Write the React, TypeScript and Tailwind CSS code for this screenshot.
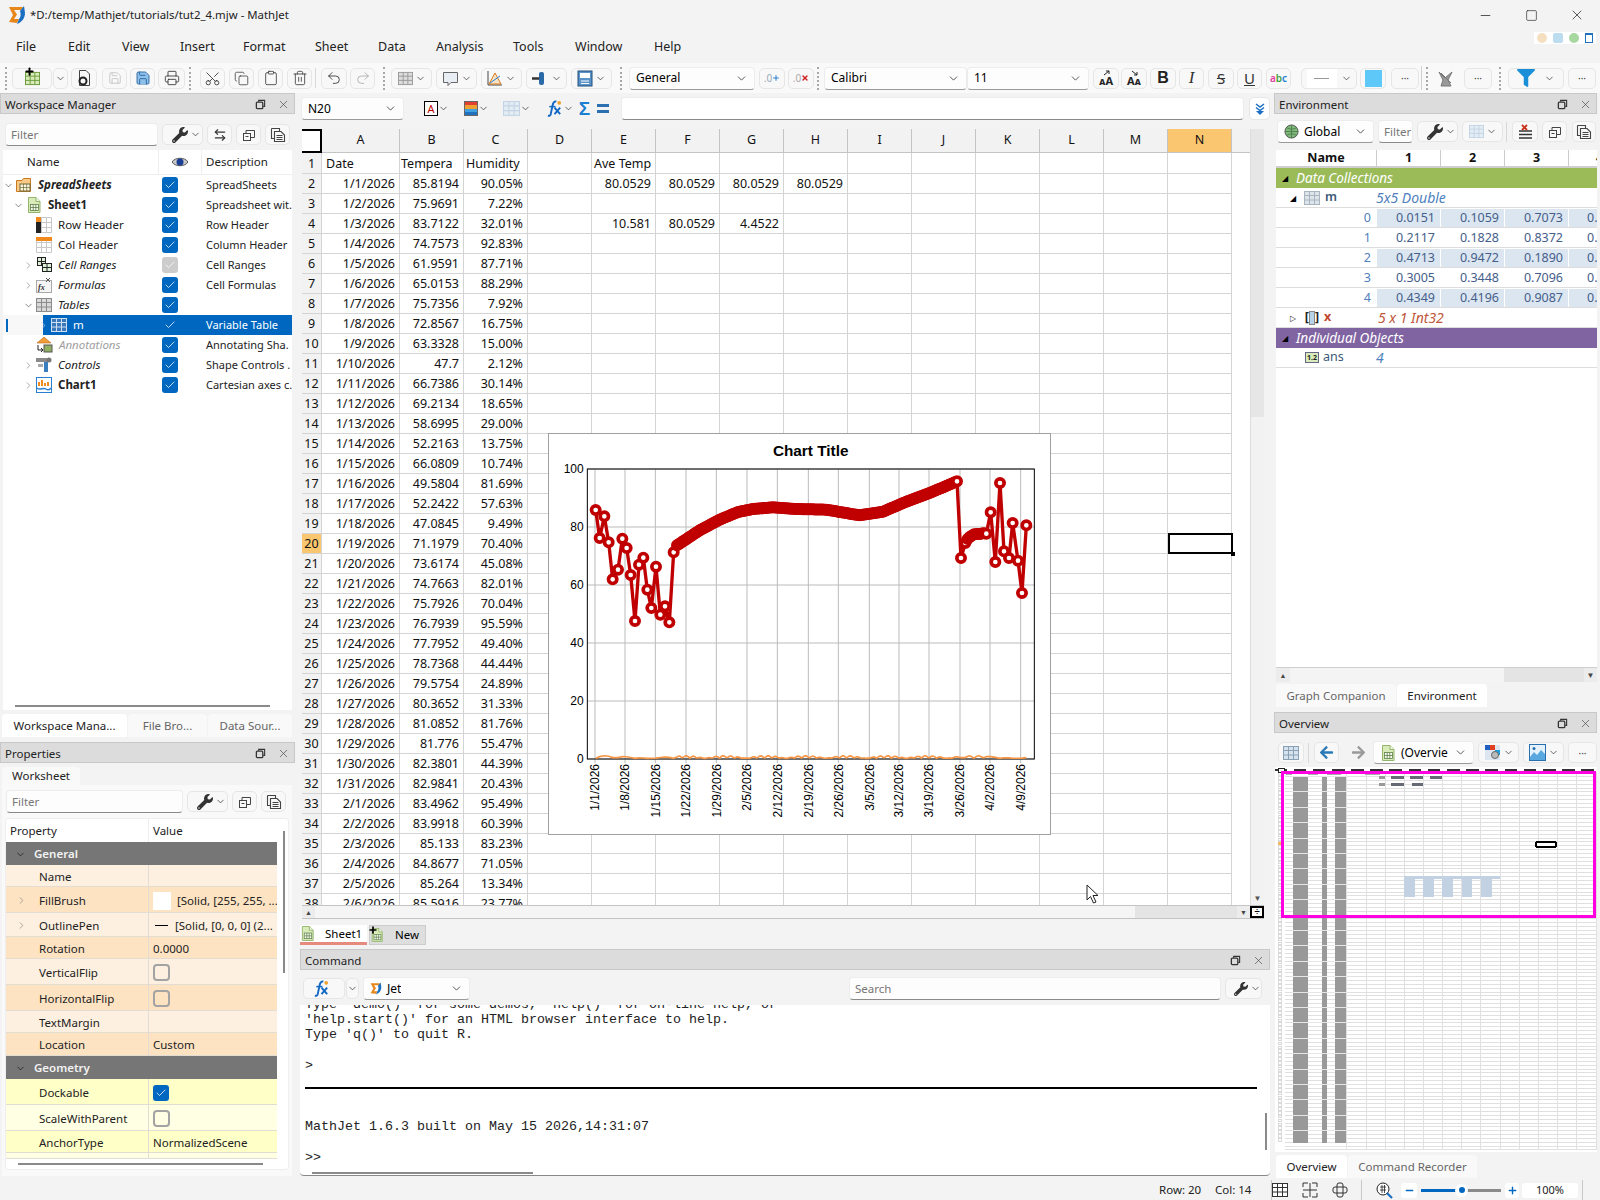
import type { ReactNode } from 'react';
import { ArrowLeftRight, Check, ChevronDown, ChevronRight, Clipboard, Copy, Minus, Plus, Printer, Redo2, Save, Scissors, Square, Trash2, Undo2, X } from 'lucide-react';
import { FaArrowLeft, FaArrowRight, FaFilter, FaWrench } from 'react-icons/fa';

const sheetRows = [
  ['1/1/2026', '85.8194', '90.05%'], ['1/2/2026', '75.9691', '7.22%'], ['1/3/2026', '83.7122', '32.01%'],
  ['1/4/2026', '74.7573', '92.83%'], ['1/5/2026', '61.9591', '87.71%'], ['1/6/2026', '65.0153', '88.29%'],
  ['1/7/2026', '75.7356', '7.92%'], ['1/8/2026', '72.8567', '16.75%'], ['1/9/2026', '63.3328', '15.00%'],
  ['1/10/2026', '47.7', '2.12%'], ['1/11/2026', '66.7386', '30.14%'], ['1/12/2026', '69.2134', '18.65%'],
  ['1/13/2026', '58.6995', '29.00%'], ['1/14/2026', '52.2163', '13.75%'], ['1/15/2026', '66.0809', '10.74%'],
  ['1/16/2026', '49.5804', '81.69%'], ['1/17/2026', '52.2422', '57.63%'], ['1/18/2026', '47.0845', '9.49%'],
  ['1/19/2026', '71.1979', '70.40%'], ['1/20/2026', '73.6174', '45.08%'], ['1/21/2026', '74.7663', '82.01%'],
  ['1/22/2026', '75.7926', '70.04%'], ['1/23/2026', '76.7939', '95.59%'], ['1/24/2026', '77.7952', '49.40%'],
  ['1/25/2026', '78.7368', '44.44%'], ['1/26/2026', '79.5754', '24.89%'], ['1/27/2026', '80.3652', '31.33%'],
  ['1/28/2026', '81.0852', '81.76%'], ['1/29/2026', '81.776', '55.47%'], ['1/30/2026', '82.3801', '44.39%'],
  ['1/31/2026', '82.9841', '20.43%'], ['2/1/2026', '83.4962', '95.49%'], ['2/2/2026', '83.9918', '60.39%'],
  ['2/3/2026', '85.133', '83.23%'], ['2/4/2026', '84.8677', '71.05%'], ['2/5/2026', '85.264', '13.34%'],
  ['2/6/2026', '85.5916', '23.77%'],
];

const columns = ['B', 'C', 'D', 'E', 'F', 'G', 'H', 'I', 'J', 'K', 'L', 'M', 'N'];

const extraCells: Record<number, Record<string, string>> = {
  2: { E: '80.0529', F: '80.0529', G: '80.0529', H: '80.0529' },
  4: { E: '10.581', F: '80.0529', G: '4.4522' },
};

function GridIcon({ size = 14, color = '#8f9aa3', fill = '#e8ecef' }: { size?: number; color?: string; fill?: string }) {
  return (
    <svg width={size} height={size} viewBox="0 0 16 16" className="shrink-0">
      <rect x="0.5" y="1.5" width="15" height="13" fill={fill} stroke={color} />
      <path d="M0.5 5.5H15.5M0.5 10H15.5M5.5 1.5V14.5M10.5 1.5V14.5" stroke={color} fill="none" />
    </svg>
  );
}

function SheetIcon({ size = 16 }: { size?: number }) {
  return (
    <svg width={size} height={size} viewBox="0 0 16 16" className="shrink-0">
      <path d="M2.5 0.5H10L14 4.5V15.5H2.5Z" fill="#d8ebb8" stroke="#93b56c" />
      <path d="M10 0.5V4.5H14" fill="#f3f9e8" stroke="#93b56c" />
      <rect x="4.5" y="7.5" width="8" height="6" fill="#f6faef" stroke="#5f7f4a" strokeWidth="0.8" />
      <path d="M4.5 10.5H12.5M7.2 7.5V13.5M9.8 7.5V13.5" stroke="#5f7f4a" strokeWidth="0.8" />
    </svg>
  );
}

function FxIcon({ size = 18 }: { size?: number }) {
  return (
    <svg width={size} height={size} viewBox="0 0 18 18" className="shrink-0">
      <path d="M11 1.5C8 1 7.5 3 7 5.5L5 15C4.6 16.7 3.5 17 2 16.5" fill="none" stroke="#1168c4" strokeWidth="2" />
      <path d="M3.5 7H10" stroke="#1168c4" strokeWidth="1.6" />
      <path d="M9 8L15 15M15 8L9 15" stroke="#1168c4" strokeWidth="2" />
      <circle cx="14" cy="3" r="2" fill="#f0a030" />
    </svg>
  );
}

function DockIcon({ size = 11 }: { size?: number }) {
  return (
    <svg width={size} height={size} viewBox="0 0 12 12" className="shrink-0">
      <rect x="1.5" y="3.5" width="7" height="7" rx="1" fill="none" stroke="#333" strokeWidth="1.4" />
      <path d="M4 3V1.5H10.5V8H9" fill="none" stroke="#333" strokeWidth="1.2" />
    </svg>
  );
}

function PasteDocIcon() {
  return (
    <svg width="16" height="16" viewBox="0 0 16 16" className="shrink-0">
      <path d="M1.5 1.5H9.5V4M4.5 4.5H11L14.5 8V14.5H4.5Z M1.5 1.5V11.5H4.5" fill="none" stroke="#444" strokeWidth="1.1" />
      <path d="M6.5 8.5H12.5M6.5 10.5H12.5M6.5 12.5H12.5" stroke="#444" />
    </svg>
  );
}

function CopyDocIcon() {
  return (
    <svg width="14" height="14" viewBox="0 0 14 14" className="shrink-0">
      <rect x="1.5" y="5.5" width="7" height="7" fill="none" stroke="#444" />
      <path d="M3.5 8.5H6.5" stroke="#444" />
      <path d="M4 5V2.5H12.5V9.5H9" fill="none" stroke="#444" />
    </svg>
  );
}

function Tick({ color = '#333' }: { color?: string }) {
  return <ChevronDown size={11} color={color} strokeWidth={1.6} className="shrink-0" />;
}

function Btn({ className, children }: { className: string; children?: ReactNode }) {
  return (
    <div className={`flex h-[21px] shrink-0 items-center justify-center rounded-[5px] border border-[#e6e6e6] bg-[#f8f8f8] ${className}`}>
      {children}
    </div>
  );
}

function Grip({ className = '' }: { className?: string }) {
  return <div className={`h-[23px] w-0 shrink-0 border-l-2 border-dotted border-[#a8a8a8] ${className}`} />;
}

function Combo({ className, children }: { className: string; children: ReactNode }) {
  return (
    <div className={`flex h-[23px] shrink-0 items-center justify-between rounded-[4px] border border-[#ececec] border-b-[#9a9a9a] bg-[#fdfdfd] px-[6px] text-[12px] ${className}`}>
      <div className="flex items-center gap-[5px] overflow-hidden whitespace-nowrap">{children}</div>
      <ChevronDown size={13} color="#333" strokeWidth={1.5} className="shrink-0" />
    </div>
  );
}

function FilterInput({ className, label = 'Filter' }: { className: string; label?: string }) {
  return (
    <div className={`flex h-[23px] shrink-0 items-center rounded-[4px] border border-[#ececec] border-b-[#8a8a8a] bg-[#fdfdfd] pl-[5px] text-[11.5px] text-[#777] ${className}`}>
      {label}
    </div>
  );
}

function WrenchBtn({ className = 'w-[41px]' }: { className?: string }) {
  return (
    <Btn className={`${className} gap-[2px] pl-[7px]`}>
      <FaWrench size={16} color="#333" />
      <Tick />
    </Btn>
  );
}

function DockTitle({ title }: { title: string }) {
  return (
    <div className="flex h-[21px] shrink-0 items-center justify-between border border-[#c8c8c8] bg-[#dcdcdc] pl-[4px] pr-[4px] pt-[2px] text-[11.5px] text-[#222]">
      <span>{title}</span>
      <div className="flex items-center gap-[11px]">
        <DockIcon />
        <X size={13} color="#444" strokeWidth={1.2} />
      </div>
    </div>
  );
}

function TabStrip({ tabs, className = '' }: { tabs: { label: string; active?: boolean; width: string }[]; className?: string }) {
  return (
    <div className={`flex h-[23px] shrink-0 gap-[1px] text-[11.5px] ${className}`}>
      {tabs.map((t) => (
        <div
          key={t.label}
          className={`flex items-center justify-center rounded-t-[4px] whitespace-nowrap ${t.width} ${t.active ? 'bg-white text-[#222]' : 'bg-[#f9f9f9] text-[#666]'}`}
        >
          {t.label}
        </div>
      ))}
    </div>
  );
}

function CheckBox({ checked = true, disabled = false }: { checked?: boolean; disabled?: boolean }) {
  if (!checked) return <div className="h-[17px] w-[17px] rounded-[4px] border-2 border-[#a3a3a3]" />;
  return (
    <div className={`flex h-[16px] w-[16px] items-center justify-center rounded-[3px] ${disabled ? 'bg-[#cccccc]' : 'bg-[#0067c0]'}`}>
      <Check size={12} color="#fff" strokeWidth={1.5} />
    </div>
  );
}

function TitleBar() {
  return (
    <div className="flex h-[30px] shrink-0 items-center">
      <svg width="18" height="20" viewBox="0 0 18 20" className="ml-[8px] shrink-0">
        <path d="M1 2H15L13 5H6L9 9.5L6 14H11L9 18L1 17L5 10Z" fill="#e8861a" />
        <path d="M12 6L16 1L17 8C17 13 14 17 9 19L11 14C13 12 13 9 12 6Z" fill="#1a6fc2" />
      </svg>
      <span className="ml-[4px] text-[11.4px] text-[#222]">*D:/temp/Mathjet/tutorials/tut2_4.mjw - MathJet</span>
      <div className="ml-auto flex items-center">
        <div className="flex w-[46px] justify-center"><Minus size={15} color="#222" strokeWidth={1.2} /></div>
        <div className="flex w-[46px] justify-center"><Square size={13} color="#222" strokeWidth={1.2} /></div>
        <div className="flex w-[46px] justify-center"><X size={16} color="#222" strokeWidth={1.1} /></div>
      </div>
    </div>
  );
}

const menus = [
  { label: 'File', width: 'w-[52px]' },
  { label: 'Edit', width: 'w-[54px]' },
  { label: 'View', width: 'w-[58px]' },
  { label: 'Insert', width: 'w-[63px]' },
  { label: 'Format', width: 'w-[72px]' },
  { label: 'Sheet', width: 'w-[63px]' },
  { label: 'Data', width: 'w-[58px]' },
  { label: 'Analysis', width: 'w-[77px]' },
  { label: 'Tools', width: 'w-[62px]' },
  { label: 'Window', width: 'w-[79px]' },
  { label: 'Help', width: 'w-[50px]' },
];

function MenuBar() {
  return (
    <div className="relative flex h-[33px] shrink-0 items-center pl-[16px] pt-[2px] text-[12.5px] text-[#222]">
      {menus.map((m) => (
        <div key={m.label} className={m.width}>{m.label}</div>
      ))}
      <div className="absolute left-[1534px] top-[2px] flex h-[12px] w-[62px] items-center justify-around bg-white">
        <div className="h-[10px] w-[10px] rounded-full bg-[#f6dfc0]" />
        <div className="h-[10px] w-[10px] rounded-[2px] bg-[#bcdcf0]" />
        <div className="h-[10px] w-[10px] rounded-full bg-[#a6d8a0]" />
        <div className="h-[10px] w-[8px] border border-[#2070c0] border-t-2" />
      </div>
    </div>
  );
}

function ColorDots({ size = 16 }: { size?: number }) {
  return (
    <svg width={size} height={size} viewBox="0 0 16 16" className="shrink-0">
      <path d="M1 1V15H15" fill="none" stroke="#444" />
      <path d="M2 14L8 3L14 14Z" fill="#f7e3c5" stroke="#d97a20" />
      <path d="M3 13L13 6" stroke="#2a7fd0" />
    </svg>
  );
}

function FontSizeBtn({ className, up }: { className: string; up: boolean }) {
  return (
    <Btn className={`relative items-end ${className}`}>
      <span className="text-[11px] font-bold leading-[15px] text-[#222]">{up ? 'ᴀA' : 'Aᴀ'}</span>
      <svg width="10" height="6" viewBox="0 0 10 6" className="absolute left-[9px] top-[1px]">
        <path d={up ? 'M1 5L6 1M6 1H3M6 1V4' : 'M1 1L6 5M6 5H3M6 5V2'} fill="none" stroke="#222" />
      </svg>
    </Btn>
  );
}

function MainToolbar() {
  return (
    <div className="flex h-[30px] shrink-0 items-center bg-[#f9f9f9] pl-[5px]">
      <Grip />
      <Btn className="ml-[5px] w-[40px]">
        <div className="relative">
          <GridIcon size={15} color="#6a9a3a" fill="#d8ebb8" />
          <Plus size={11} color="#000" strokeWidth={4} className="absolute left-[-1px] top-[-5px]" />
        </div>
      </Btn>
      <Btn className="ml-[1px] w-[15px]"><Tick /></Btn>
      <Btn className="ml-[3px] w-[26px]">
        <svg width="16" height="18" viewBox="0 0 16 18"><path d="M3.5 1.5H10L13.5 5V16.5H3.5Z" fill="none" stroke="#444" /><circle cx="7" cy="12" r="3.5" fill="none" stroke="#222" strokeWidth="2" /></svg>
      </Btn>
      <Btn className="ml-[5px] w-[25px]"><Save size={14} color="#bbb" strokeWidth={1.3} /></Btn>
      <Btn className="ml-[3px] w-[25px]"><Save size={16} color="#1f5f9e" fill="#8fc0ea" strokeWidth={1.3} /></Btn>
      <Btn className="ml-[3px] w-[27px]"><Printer size={16} color="#333" strokeWidth={1.3} /></Btn>
      <Grip className="ml-[4px]" />
      <Btn className="ml-[9px] w-[25px]"><Scissors size={17} color="#333" strokeWidth={1.2} className="-rotate-90" /></Btn>
      <Btn className="ml-[4px] w-[25px]"><Copy size={15} color="#333" strokeWidth={1.2} /></Btn>
      <Btn className="ml-[4px] w-[25px]"><Clipboard size={16} color="#333" strokeWidth={1.2} /></Btn>
      <Btn className="ml-[4px] w-[25px]"><Trash2 size={16} color="#333" strokeWidth={1.2} /></Btn>
      <div className="ml-[3px] h-[20px] w-px bg-[#d8d8d8]" />
      <Btn className="ml-[5px] w-[26px]"><Undo2 size={16} color="#333" strokeWidth={1.3} /></Btn>
      <Btn className="ml-[3px] w-[25px]"><Redo2 size={16} color="#aaa" strokeWidth={1.3} /></Btn>
      <Grip className="ml-[8px]" />
      <Btn className="ml-[6px] w-[41px] gap-[2px]"><GridIcon size={15} color="#999" fill="#ddd" /><Tick /></Btn>
      <Btn className="ml-[4px] w-[41px] gap-[2px]">
        <svg width="17" height="17" viewBox="0 0 17 17"><path d="M1.5 2.5H15.5V12.5H9L6 15.5V12.5H1.5Z" fill="#e8eef4" stroke="#666" /></svg>
        <Tick />
      </Btn>
      <Btn className="ml-[4px] w-[41px] gap-[2px]"><ColorDots /><Tick /></Btn>
      <Btn className="ml-[4px] w-[41px] gap-[2px]">
        <svg width="17" height="15" viewBox="0 0 17 15"><rect x="7" y="1" width="5" height="13" rx="2" fill="#2a6aa8" /><path d="M0 7.5H7" stroke="#333" strokeWidth="2.5" /></svg>
        <Tick />
      </Btn>
      <Btn className="ml-[4px] w-[41px] gap-[2px]">
        <svg width="16" height="17" viewBox="0 0 16 17"><rect x="1" y="1" width="14" height="15" fill="#5a93c8" stroke="#1f4d7a" /><rect x="3" y="3" width="10" height="5" fill="#fff" /><path d="M4 11H12M4 13.5H12" stroke="#fff" /></svg>
        <Tick />
      </Btn>
      <Grip className="ml-[8px]" />
      <Combo className="ml-[7px] w-[126px]">General</Combo>
      <Btn className="ml-[4px] w-[26px]"><span className="text-[10px] text-[#9ab]">.0</span><Plus size={8} color="#2a7fd0" strokeWidth={3} /></Btn>
      <Btn className="ml-[3px] w-[26px]"><span className="text-[10px] text-[#aaa]">.0</span><X size={8} color="#d02020" strokeWidth={4} /></Btn>
      <Grip className="ml-[3px]" />
      <Combo className="ml-[5px] w-[143px]">Calibri</Combo>
      <Combo className="w-[122px]">11</Combo>
      <FontSizeBtn className="ml-[4px] w-[26px]" up />
      <FontSizeBtn className="ml-[2px] w-[26px]" up={false} />
      <Btn className="ml-[3px] w-[26px]"><span className="font-['Liberation_Sans'] text-[16px] font-bold text-[#222]">B</span></Btn>
      <Btn className="ml-[3px] w-[25px]"><span className="font-['Liberation_Serif'] text-[17px] italic text-[#333]">I</span></Btn>
      <Btn className="ml-[4px] w-[26px]"><span className="text-[15px] text-[#333] line-through">S</span></Btn>
      <Btn className="ml-[3px] w-[25px]"><span className="text-[15px] text-[#333] underline">U</span></Btn>
      <Btn className="ml-[4px] w-[25px]">
        <span className="text-[10px] font-semibold leading-none"><span className="text-[#e040a0]">a</span><span className="text-[#40a040]">b</span><span className="text-[#2080d0]">c</span></span>
      </Btn>
      <Btn className="ml-[10px] w-[56px] gap-[4px]"><div className="flex h-[19px] w-[30px] items-center justify-center bg-white"><div className="h-px w-[15px] bg-[#999]" /></div><Tick /></Btn>
      <Btn className="ml-[3px] w-[26px]"><div className="h-[17px] w-[17px] bg-[#5ec8f8]" /></Btn>
      <Btn className="ml-[5px] w-[28px]"><span className="text-[10px] leading-none text-[#444]">···</span></Btn>
      <div className="ml-[2px] h-[24px] w-px bg-[#d0d0d0]" />
      <Grip className="ml-[4px]" />
      <div className="ml-[5px] flex w-[25px] justify-center">
        <svg width="19" height="19" viewBox="0 0 19 19"><path d="M3 3L9 9L16 3L12 11L15 17H5L7 11Z" fill="#999" stroke="#777" /><path d="M5 4L15 14" stroke="#777" /></svg>
      </div>
      <Btn className="ml-[6px] w-[28px]"><span className="text-[10px] leading-none text-[#444]">···</span></Btn>
      <Grip className="ml-[7px]" />
      <Btn className="ml-[7px] w-[56px] gap-[9px]"><FaFilter size={18} color="#1a8fd8" /><Tick /></Btn>
      <Btn className="ml-[4px] w-[28px]"><span className="text-[10px] leading-none text-[#444]">···</span></Btn>
    </div>
  );
}

const treeRows: { label: string; desc: string; indent: string; icon: ReactNode; open?: boolean; closed?: boolean; style: string; disabled?: boolean }[] = [
  {
    label: 'SpreadSheets', desc: 'SpreadSheets', indent: 'pl-[0px]', open: true, style: 'font-bold italic',
    icon: (
      <svg width="16" height="16" viewBox="0 0 16 16" className="shrink-0"><path d="M0.5 3.5H6L7.5 1.5H14.5V14.5H0.5Z" fill="#f8c987" stroke="#c9781e" /><rect x="4" y="7" width="10" height="7" fill="#fdf4df" stroke="#6a6a3a" /><path d="M4 10.5H14M7.5 7V14M10.7 7V14" stroke="#6a6a3a" strokeWidth="0.7" /></svg>
    ),
  },
  { label: 'Sheet1', desc: 'Spreadsheet wit.', indent: 'pl-[10px]', open: true, style: 'font-bold', icon: <SheetIcon /> },
  {
    label: 'Row Header', desc: 'Row Header', indent: 'pl-[33px]', style: '',
    icon: <svg width="16" height="16" viewBox="0 0 16 16" className="shrink-0"><path d="M0.5 0.5H15.5V15.5H0.5ZM0.5 5.5H15.5M0.5 10.5H15.5M5.5 0.5V15.5M10.5 0.5V15.5" fill="#fff" stroke="#c8c8c8" /><rect x="0" y="0" width="5" height="5" fill="#f0891e" /><rect x="0" y="5" width="5" height="11" fill="#222" /></svg>,
  },
  {
    label: 'Col Header', desc: 'Column Header', indent: 'pl-[33px]', style: '',
    icon: <svg width="16" height="16" viewBox="0 0 16 16" className="shrink-0"><path d="M0.5 0.5H15.5V15.5H0.5ZM0.5 5.5H15.5M0.5 10.5H15.5M5.5 0.5V15.5M10.5 0.5V15.5" fill="#fff" stroke="#c8c8c8" /><rect x="0" y="0" width="16" height="4" fill="#f0891e" /></svg>,
  },
  {
    label: 'Cell Ranges', desc: 'Cell Ranges', indent: 'pl-[20px]', closed: true, style: 'italic', disabled: true,
    icon: <svg width="16" height="16" viewBox="0 0 16 16" className="shrink-0"><rect x="1.5" y="0.5" width="8" height="8" fill="#dff0d8" stroke="#222" /><rect x="6.5" y="6.5" width="9" height="8" fill="#dff0d8" stroke="#222" /><path d="M1.5 4.5H9.5M5.5 0.5V8.5M6.5 10.5H15.5M11 6.5V14.5" stroke="#222" /></svg>,
  },
  {
    label: 'Formulas', desc: 'Cell Formulas', indent: 'pl-[20px]', closed: true, style: 'italic',
    icon: <svg width="16" height="16" viewBox="0 0 16 16" className="shrink-0"><rect x="0.5" y="3.5" width="15" height="12" fill="#f5f5f5" stroke="#aaa" /><text x="2" y="13" fontSize="8" fontStyle="italic" fontWeight="bold" fill="#333" fontFamily="Liberation Serif">fx</text><path d="M10 1L14 5M14 1L10 5" stroke="#555" /></svg>,
  },
  { label: 'Tables', desc: '', indent: 'pl-[20px]', open: true, style: 'italic', icon: <GridIcon size={16} color="#8b8b8b" fill="#d9d9d9" /> },
];

const treeRowsAfter: typeof treeRows = [
  {
    label: 'Annotations', desc: 'Annotating Sha.', indent: 'pl-[33px]', style: 'italic text-[#a0a0a0]',
    icon: <svg width="17" height="16" viewBox="0 0 17 16" className="shrink-0"><path d="M8 0L15 6H1Z" fill="#f29d38" stroke="#b8691a" strokeWidth="0.6" /><rect x="8" y="8" width="8" height="7" fill="#8fb060" stroke="#555" /><path d="M2 8V13H7M5 11L7 13L5 15" fill="none" stroke="#222" /></svg>,
  },
  {
    label: 'Controls', desc: 'Shape Controls .', indent: 'pl-[20px]', closed: true, style: 'italic',
    icon: <svg width="16" height="16" viewBox="0 0 16 16" className="shrink-0"><rect x="0" y="1" width="11" height="4" fill="#8a8a8a" /><circle cx="13" cy="3" r="2.5" fill="#777" /><rect x="8" y="5" width="4" height="10" fill="#3a7fc0" /><rect x="2" y="7" width="5" height="3" fill="#aaa" /></svg>,
  },
  {
    label: 'Chart1', desc: 'Cartesian axes c.', indent: 'pl-[20px]', closed: true, style: 'font-bold',
    icon: <svg width="16" height="16" viewBox="0 0 16 16" className="shrink-0"><rect x="0.5" y="0.5" width="15" height="15" fill="#fff" stroke="#2a7fd0" /><path d="M3 9V5M6 9V3M9 9V6M12 9V5" stroke="#f0891e" strokeWidth="2" /><path d="M1 11C4 14 7 10 10 12S14 12 15 11" fill="none" stroke="#2a7fd0" strokeWidth="1.4" /></svg>,
  },
];

function TreeRow({ row }: { row: (typeof treeRows)[number] }) {
  return (
    <div className="flex h-[20px] items-center">
      <div className={`flex w-[155px] items-center gap-[2px] overflow-hidden whitespace-nowrap ${row.indent}`}>
        {row.open && <ChevronDown size={11} color="#555" strokeWidth={1.5} className="shrink-0" />}
        {row.closed && <ChevronRight size={11} color="#888" strokeWidth={1.5} className="shrink-0" />}
        {row.icon}
        <span className={`ml-[4px] ${row.style}`}>{row.label}</span>
      </div>
      <div className="flex w-[44px] pl-[4px]"><CheckBox disabled={row.disabled} /></div>
      <div className="w-[90px] whitespace-nowrap pl-[4px] text-[11px]">{row.desc}</div>
    </div>
  );
}

function WorkspacePanel() {
  return (
    <div className="flex h-[644px] shrink-0 flex-col">
      <DockTitle title="Workspace Manager" />
      <div className="mt-[9px] flex shrink-0 items-center gap-[4px] pl-[5px]">
        <FilterInput className="w-[153px]" />
        <WrenchBtn />
        <Btn className="w-[25px]"><ArrowLeftRight size={14} color="#333" strokeWidth={2} /></Btn>
        <Btn className="w-[25px]"><CopyDocIcon /></Btn>
        <Btn className="w-[25px]"><PasteDocIcon /></Btn>
      </div>
      <div className="relative ml-[3px] mt-[4px] flex w-[289px] flex-1 flex-col overflow-hidden bg-white text-[11.5px] text-[#222]">
        <div className="flex h-[25px] shrink-0 items-center border-b border-[#eee]">
          <div className="w-[155px] pl-[24px]">Name</div>
          <div className="flex h-full w-[44px] items-center justify-center border-x border-[#eee]">
            <svg width="16" height="12" viewBox="0 0 16 12"><path d="M0 6C3 1 13 1 16 6C13 11 3 11 0 6Z" fill="#c9c9c9" stroke="#555" /><circle cx="8" cy="6" r="3.5" fill="#1a3f94" /></svg>
          </div>
          <div className="pl-[4px]">Description</div>
        </div>
        {treeRows.map((r) => <TreeRow key={r.label} row={r} />)}
        <div className="flex h-[20px] items-center">
          <div className="flex h-full w-[40px] items-center bg-[#f8f8f8] pl-[3px]"><div className="h-[13px] w-[2px] bg-[#0067c0]" /></div>
          <div className="flex h-full flex-1 items-center bg-[#0067c0] text-white">
            <div className="flex w-[115px] items-center">
              <ChevronRight size={11} color="#cbd9e8" strokeWidth={1.5} className="ml-[-5px] mr-[2px]" />
              <GridIcon size={16} color="#cfe0f2" fill="#3a78bc" />
              <span className="ml-[6px]">m</span>
            </div>
            <div className="flex w-[44px] pl-[4px]"><div className="flex w-[16px] justify-center"><Check size={12} color="#fff" strokeWidth={1.5} /></div></div>
            <div className="pl-[4px] text-[11px]">Variable Table</div>
          </div>
        </div>
        {treeRowsAfter.map((r) => <TreeRow key={r.label} row={r} />)}
        <div className="absolute bottom-[3px] left-[12px] h-[2px] w-[255px] bg-[#8a8a8a]" />
      </div>
      <TabStrip
        className="mt-[4px] pl-[2px]"
        tabs={[
          { label: 'Workspace Mana...', active: true, width: 'w-[125px]' },
          { label: 'File Bro...', width: 'w-[79px]' },
          { label: 'Data Sour...', width: 'w-[84px]' },
        ]}
      />
    </div>
  );
}

const propRows: { name?: string; value?: ReactNode; h: string; bg: string; group?: boolean; expand?: boolean }[] = [
  { name: 'General', group: true, h: 'h-[23px]', bg: 'bg-[#767676]' },
  { name: 'Name', h: 'h-[22px]', bg: 'bg-[#fdf0e0]' },
  {
    name: 'FillBrush', expand: true, h: 'h-[26px]', bg: 'bg-[#fde3c2]',
    value: <div className="flex items-center gap-[6px]"><div className="h-[18px] w-[18px] bg-white" /><span>[Solid, [255, 255, ...</span></div>,
  },
  {
    name: 'OutlinePen', expand: true, h: 'h-[24px]', bg: 'bg-[#fdf0e0]',
    value: <div className="flex items-center gap-[7px]"><div className="ml-[2px] h-px w-[13px] bg-black" /><span>[Solid, [0, 0, 0] (2...</span></div>,
  },
  { name: 'Rotation', value: '0.0000', h: 'h-[22px]', bg: 'bg-[#fde3c2]' },
  { name: 'VerticalFlip', value: <CheckBox checked={false} />, h: 'h-[26px]', bg: 'bg-[#fdf0e0]' },
  { name: 'HorizontalFlip', value: <CheckBox checked={false} />, h: 'h-[26px]', bg: 'bg-[#fde3c2]' },
  { name: 'TextMargin', h: 'h-[22px]', bg: 'bg-[#fdf0e0]' },
  { name: 'Location', value: 'Custom', h: 'h-[23px]', bg: 'bg-[#fde3c2]' },
  { name: 'Geometry', group: true, h: 'h-[23px]', bg: 'bg-[#767676]' },
  { name: 'Dockable', value: <CheckBox />, h: 'h-[26px]', bg: 'bg-[#ffffc8]' },
  { name: 'ScaleWithParent', value: <CheckBox checked={false} />, h: 'h-[26px]', bg: 'bg-[#ffffe4]' },
  { name: 'AnchorType', value: 'NormalizedScene', h: 'h-[22px]', bg: 'bg-[#ffffc8]' },
  { h: 'h-[6px]', bg: 'bg-[#ffffe4]' },
];

function PropertiesPanel() {
  return (
    <div className="mt-[5px] flex flex-1 flex-col">
      <DockTitle title="Properties" />
      <div className="ml-[2px] mt-[4px] flex h-[18px] w-[78px] items-center justify-center rounded-t-[4px] bg-[#f9f9f9] text-[11.5px] text-[#222]">Worksheet</div>
      <div className="ml-[2px] flex w-[290px] flex-1 flex-col bg-[#f9f9f9] pl-[3px]">
        <div className="mt-[5px] flex shrink-0 items-center gap-[4px] pl-[1px]">
          <FilterInput className="w-[177px]" />
          <WrenchBtn />
          <Btn className="w-[25px]"><CopyDocIcon /></Btn>
          <Btn className="w-[25px]"><PasteDocIcon /></Btn>
        </div>
        <div className="relative mt-[5px] h-[352px] w-[284px] overflow-hidden rounded-[3px] border border-[#eee] bg-white text-[11.5px] text-[#222]">
          <div className="flex h-[23px] w-[271px] items-center">
            <div className="w-[142px] pl-[4px]">Property</div>
            <div className="flex h-full items-center border-l border-[#eee] pl-[4px]">Value</div>
          </div>
          <div className="w-[271px]">
            {propRows.map((r, i) =>
              r.group ? (
                <div key={i} className={`flex items-center pt-[1px] font-semibold text-[#f2f2f2] ${r.h} ${r.bg}`}>
                  <ChevronDown size={11} color="#222" strokeWidth={1.8} className="ml-[9px]" />
                  <span className="ml-[8px]">{r.name}</span>
                </div>
              ) : (
                <div key={i} className={`flex border-b border-[#e2dcd2] ${r.h} ${r.bg}`}>
                  <div className="relative flex w-[142px] items-center pl-[33px] pt-[2px]">
                    {r.expand && <ChevronRight size={11} color="#888" strokeWidth={1.5} className="absolute left-[10px]" />}
                    {r.name}
                  </div>
                  <div className="flex flex-1 items-center overflow-hidden whitespace-nowrap border-l border-[#e2dcd2] pl-[4px] pt-[2px]">{r.value}</div>
                </div>
              )
            )}
          </div>
          <div className="absolute right-[3px] top-[12px] h-[142px] w-[2px] bg-[#8a8a8a]" />
          <div className="absolute bottom-[4px] left-[12px] h-[2px] w-[245px] bg-[#8a8a8a]" />
        </div>
      </div>
    </div>
  );
}

function NameBar() {
  return (
    <div className="flex h-[31px] shrink-0 items-center">
      <Combo className="ml-[1px] w-[103px]">N20</Combo>
      <div className="ml-[20px] flex w-[26px] items-center">
        <div className="flex h-[15px] w-[14px] items-center justify-center border border-black bg-white text-[11px] leading-none text-[#c00000]">A</div>
        <Tick />
      </div>
      <div className="ml-[14px] flex w-[28px] items-center">
        <div className="flex h-[15px] w-[14px] flex-col border border-[#666]">
          <div className="flex-1 bg-[#e04030]" /><div className="flex-1 bg-[#f0a030]" /><div className="flex-1 bg-[#40a0e0]" /><div className="flex-1 bg-[#2070c0]" />
        </div>
        <Tick />
      </div>
      <div className="ml-[11px] flex w-[30px] items-center"><GridIcon size={17} color="#c4d4e4" fill="#e4ecf4" /><Tick /></div>
      <div className="ml-[13px] flex w-[28px] items-center"><FxIcon size={17} /><Tick /></div>
      <span className="ml-[2px] w-[17px] text-center font-['Liberation_Sans'] text-[19px] font-bold leading-none text-[#1a7fd0]">Σ</span>
      <div className="ml-[4px] flex w-[12px] flex-col gap-[3px]"><div className="h-[3px] bg-[#2a6fb0]" /><div className="h-[3px] bg-[#2a6fb0]" /></div>
      <div className="ml-[12px] h-[23px] flex-1 rounded-[4px] border border-[#ececec] border-b-[#8a8a8a] bg-white" />
      <Btn className="ml-[5px] h-[23px] w-[21px] bg-white text-[11px]">
        <svg width="14" height="14" viewBox="0 0 14 14"><path d="M3 2L7 5L11 2M3 5.5L7 8.5L11 5.5" fill="none" stroke="#1a6fc2" strokeWidth="1.5" /><path d="M3 9L7 13L11 9" fill="#1a6fc2" /></svg>
      </Btn>
    </div>
  );
}

const yTicks = [
  { y: 118, label: '100' }, { y: 292, label: '80' }, { y: 466, label: '60' },
  { y: 640, label: '40' }, { y: 814, label: '20' }, { y: 988, label: '0' },
];

const xTicks = [
  { x: 166, label: '1/1/2026' }, { x: 256, label: '1/8/2026' }, { x: 347, label: '1/15/2026' }, { x: 439, label: '1/22/2026' },
  { x: 530, label: '1/29/2026' }, { x: 622, label: '2/5/2026' }, { x: 713, label: '2/12/2026' }, { x: 806, label: '2/19/2026' },
  { x: 896, label: '2/26/2026' }, { x: 989, label: '3/5/2026' }, { x: 1078, label: '3/12/2026' }, { x: 1168, label: '3/19/2026' },
  { x: 1261, label: '3/26/2026' }, { x: 1351, label: '4/2/2026' }, { x: 1443, label: '4/9/2026' },
];

const startPts: number[][] = [
  [168, 241], [180, 325], [194, 260], [207, 338], [219, 449], [235, 420], [248, 327], [261, 355], [273, 436], [286, 574],
  [298, 405], [311, 384], [323, 480], [335, 535], [349, 411], [362, 555], [376, 530], [389, 578], [402, 368],
];
const curveKeys: number[][] = [
  [412, 347], [480, 302], [540, 270], [595, 247], [640, 238], [700, 233], [770, 238], [860, 240], [960, 257], [1030, 246], [1100, 216], [1170, 190], [1252, 155],
];
const endPts: number[][] = [
  [1264, 385], [1277, 340], [1284, 328], [1290, 322], [1296, 318], [1303, 314], [1310, 313], [1316, 313], [1322, 313], [1329, 311], [1335, 311], [1340, 312], [1353, 248], [1367, 397], [1381, 160], [1393, 365], [1408, 385], [1419, 280], [1435, 393], [1447, 490], [1460, 287],
];

function buildCurve() {
  const pts: number[][] = [];
  for (let i = 0; i < curveKeys.length - 1; i++) {
    const [x0, y0] = curveKeys[i];
    const [x1, y1] = curveKeys[i + 1];
    const n = Math.max(1, Math.round((x1 - x0) / 5));
    for (let k = 0; k < n; k++) pts.push([x0 + ((x1 - x0) * k) / n, y0 + ((y1 - y0) * k) / n]);
  }
  pts.push(curveKeys[curveKeys.length - 1]);
  return pts;
}

const chartPts = [...startPts, ...buildCurve(), ...endPts];
const orangePts = chartPts
  .map((p, i) => `${p[0]},${986 - Math.abs(Math.sin(i * 0.7) * Math.cos(i * 0.13)) * 8}`)
  .join(' ');

function Chart() {
  return (
    <div className="absolute left-[246px] top-[304px] h-[402px] w-[503px] border border-[#a0a0a0] bg-white">
      <svg width="501" height="400" viewBox="28 13 1503 1200" fontFamily="Liberation Sans, Arial, sans-serif">
        <text x="813" y="80" textAnchor="middle" fontSize="46" fontWeight="bold" fill="#000">Chart Title</text>
        {yTicks.map((t) => <line key={t.y} x1="143" x2="1484" y1={t.y} y2={t.y} stroke="#bbb" strokeWidth="3" />)}
        {xTicks.map((t) => <line key={t.x} x1={t.x} x2={t.x} y1="118" y2="1000" stroke="#bbb" strokeWidth="3" />)}
        <rect x="143" y="118" width="1341" height="870" fill="none" stroke="#000" strokeWidth="3" />
        {yTicks.map((t) => <text key={t.y} x="132" y={t.y + 13} textAnchor="end" fontSize="36" fill="#000">{t.label}</text>)}
        {xTicks.map((t) => (
          <text key={t.x} transform={`translate(${t.x + 13} 1003) rotate(-90)`} textAnchor="end" fontSize="36" fill="#000">{t.label}</text>
        ))}
        <polyline points={orangePts} fill="none" stroke="#f79646" strokeWidth="5" />
        <polyline points={chartPts.map((p) => p.join(',')).join(' ')} fill="none" stroke="#c00000" strokeWidth="10" />
        {chartPts.map((p, i) => <circle key={i} cx={p[0]} cy={p[1]} r="12.5" fill="#fff" stroke="#c00000" strokeWidth="11" />)}
      </svg>
    </div>
  );
}

function SheetGrid() {
  return (
    <div className="relative h-[776px] flex-1 overflow-hidden bg-white font-['Noto_Sans'] text-[12.5px] text-[#111]">
      <div className="flex h-[24px]">
        <div className="h-[24px] w-[20px] shrink-0 border-y-2 border-r-2 border-t-black border-r-black border-b-black bg-white" />
        <div className="flex w-[78px] shrink-0 items-center justify-center border-r border-b border-[#c4c4c4] bg-[#f2f2f2]">A</div>
        {columns.map((c) => (
          <div
            key={c}
            className={`flex w-[64px] shrink-0 items-center justify-center border-r border-b border-[#c4c4c4] ${c === 'N' ? 'bg-[#fac66f]' : 'bg-[#f2f2f2]'}`}
          >
            {c}
          </div>
        ))}
        <div className="flex-1 border-b border-[#c4c4c4] bg-[#f2f2f2]" />
      </div>
      <div className="flex h-[21px] [&>div]:pt-[2px]">
        <div className="flex w-[20px] shrink-0 items-center justify-center border-r border-b border-[#d4d4d4] bg-[#f2f2f2]">1</div>
        <div className="flex w-[78px] shrink-0 items-center overflow-hidden border-r border-b border-[#d4d4d4] pl-[4px]">Date</div>
        <div className="flex w-[64px] shrink-0 items-center overflow-hidden border-r border-b border-[#d4d4d4] pl-[1px]">Tempera</div>
        <div className="flex w-[64px] shrink-0 items-center overflow-hidden border-r border-b border-[#d4d4d4] pl-[2px]">Humidity</div>
        {columns.slice(2).map((c) => (
          <div key={c} className="flex w-[64px] shrink-0 items-center overflow-hidden border-r border-b border-[#d4d4d4] pl-[2px]">
            {c === 'E' ? 'Ave Temp' : ''}
          </div>
        ))}
      </div>
      {sheetRows.map((r, i) => {
        const n = i + 2;
        const extra = extraCells[n] ?? {};
        return (
          <div key={n} className="flex h-[20px] [&>div]:pt-[2px]">
            <div className={`flex w-[20px] shrink-0 items-center justify-center border-r border-b border-[#d4d4d4] ${n === 20 ? 'bg-[#fac66f]' : 'bg-[#f2f2f2]'}`}>{n}</div>
            <div className="flex w-[78px] shrink-0 items-center justify-end border-r border-b border-[#d4d4d4] pr-[4px]">{r[0]}</div>
            <div className="flex w-[64px] shrink-0 items-center justify-end border-r border-b border-[#d4d4d4] pr-[4px]">{r[1]}</div>
            <div className="flex w-[64px] shrink-0 items-center justify-end border-r border-b border-[#d4d4d4] pr-[4px]">{r[2]}</div>
            {columns.slice(2).map((c) => (
              <div key={c} className="flex w-[64px] shrink-0 items-center justify-end border-r border-b border-[#d4d4d4] pr-[4px]">{extra[c]}</div>
            ))}
          </div>
        );
      })}
      <Chart />
      <div className="absolute left-[866px] top-[404px] h-[21px] w-[65px] border-2 border-black" />
      <div className="absolute left-[929px] top-[423px] h-[4px] w-[4px] bg-black" />
      <svg width="14" height="20" viewBox="0 0 14 20" className="absolute left-[784px] top-[755px]">
        <path d="M1 1V16L4.5 12.5L7.5 19L10 18L7 11.5H12Z" fill="#fff" stroke="#222" strokeWidth="1" />
      </svg>
    </div>
  );
}

function SheetArea() {
  return (
    <div className="ml-[2px] mt-[5px] flex h-[790px] w-[962px] shrink-0 flex-col bg-white">
      <div className="flex flex-1">
        <SheetGrid />
        <div className="flex w-[14px] shrink-0 flex-col border-l border-[#ddd] bg-[#f2f2f2]">
          <div className="h-[288px] bg-[#e6e6e6]" />
          <div className="mt-auto flex h-[14px] items-center justify-center text-[8px] leading-none text-[#555]">▼</div>
        </div>
      </div>
      <div className="flex h-[14px] shrink-0 items-center border-y border-[#c4c4c4] bg-[#ececec]">
        <div className="flex w-[13px] justify-center text-[7px] leading-none text-[#444]">▲</div>
        <div className="h-full w-[820px] bg-[#f5f5f5]" />
        <div className="h-full flex-1 bg-[#e4e4e4]" />
        <div className="flex w-[13px] justify-center text-[7px] leading-none text-[#444]">▼</div>
        <div className="flex h-full w-[14px] flex-col items-center justify-center border-2 border-black bg-white text-[10px] leading-none">÷</div>
      </div>
    </div>
  );
}

function SheetTabs() {
  return (
    <div className="mt-[6px] flex h-[20px] shrink-0 text-[11.5px]">
      <div className="flex w-[67px] items-center gap-[10px] border-b-[3px] border-[#e58a7c] bg-white">
        <SheetIcon size={15} />
        <span>Sheet1</span>
      </div>
      <div className="ml-[2px] flex w-[57px] items-center gap-[11px] border border-[#ccc] bg-[#dedede]">
        <div className="relative">
          <SheetIcon size={14} />
          <Plus size={10} color="#000" strokeWidth={4} className="absolute left-[-2px] top-[-3px]" />
        </div>
        <span>New</span>
      </div>
    </div>
  );
}

function CommandPanel() {
  return (
    <div className="mt-[4px] flex flex-1 flex-col">
      <DockTitle title="Command" />
      <div className="mt-[7px] flex h-[23px] shrink-0 items-center">
        <Btn className="ml-[3px] w-[42px] pr-[6px]"><FxIcon size={17} /></Btn>
        <Btn className="ml-[1px] w-[13px]"><Tick /></Btn>
        <Combo className="ml-[4px] w-[107px]">
          <svg width="12" height="15" viewBox="0 0 18 20" className="shrink-0"><path d="M1 2H15L13 5H6L9 9.5L6 14H11L9 18L1 17L5 10Z" fill="#e8861a" /><path d="M12 6L16 1L17 8C17 13 14 17 9 19L11 14C13 12 13 9 12 6Z" fill="#1a6fc2" /></svg>
          <span>Jet</span>
        </Combo>
        <FilterInput className="ml-[379px] w-[372px]" label="Search" />
        <Btn className="ml-[4px] w-[37px] gap-[2px] pl-[8px]"><FaWrench size={16} color="#333" /><Tick /></Btn>
      </div>
      <div className="relative mt-[5px] flex-1 overflow-hidden rounded-b-[4px] border-b border-[#888] bg-white font-['Liberation_Mono'] text-[13.33px] leading-[15px] text-[#222]">
        <div className="absolute left-[5px] top-[-8px] whitespace-pre">{`Type 'demo()' for some demos, 'help()' for on-line help, or\n'help.start()' for an HTML browser interface to help.\nType 'q()' to quit R.`}</div>
        <div className="absolute left-[5px] top-[53px]">&gt;</div>
        <div className="absolute left-[5px] top-[82px] h-[2px] w-[952px] bg-black" />
        <div className="absolute left-[5px] top-[114px] whitespace-pre">MathJet 1.6.3 built on May 15 2026,14:31:07</div>
        <div className="absolute left-[5px] top-[145px]">&gt;&gt;</div>
        <div className="absolute bottom-[1px] left-[12px] h-[2px] w-[221px] bg-[#8a8a8a]" />
        <div className="absolute right-[3px] top-[108px] h-[37px] w-[2px] bg-[#8a8a8a]" />
      </div>
    </div>
  );
}

const matrix = [
  ['0', '0.0151', '0.1059', '0.7073'],
  ['1', '0.2117', '0.1828', '0.8372'],
  ['2', '0.4713', '0.9472', '0.1890'],
  ['3', '0.3005', '0.3448', '0.7096'],
  ['4', '0.4349', '0.4196', '0.9087'],
];

function EnvironmentPanel() {
  return (
    <div className="flex h-[614px] shrink-0 flex-col">
      <DockTitle title="Environment" />
      <div className="mt-[6px] flex h-[23px] shrink-0 items-center pl-[3px]">
        <Combo className="w-[97px]">
          <svg width="15" height="15" viewBox="0 0 16 16" className="shrink-0"><circle cx="8" cy="8" r="7" fill="#7fb87a" stroke="#555" /><path d="M1 8H15M8 1V15M3 4C6 6 10 6 13 4M3 12C6 10 10 10 13 12" fill="none" stroke="#3e6e3e" strokeWidth="0.7" /></svg>
          <span>Global</span>
        </Combo>
        <FilterInput className="ml-[4px] w-[35px]" />
        <WrenchBtn className="ml-[4px] w-[41px]" />
        <Btn className="ml-[4px] w-[41px] gap-[2px]"><GridIcon size={15} color="#c4d4e4" fill="#e4ecf4" /><Tick /></Btn>
        <div className="ml-[3px] h-[20px] w-px bg-[#d8d8d8]" />
        <Btn className="ml-[5px] w-[26px]">
          <svg width="15" height="15" viewBox="0 0 15 15"><path d="M1 7H14M1 10.5H14M1 14H14" stroke="#333" strokeWidth="1.4" /><path d="M4 1L9 6M9 1L4 6" stroke="#c8301a" strokeWidth="1.8" /></svg>
        </Btn>
        <Btn className="ml-[4px] w-[25px]"><CopyDocIcon /></Btn>
        <Btn className="ml-[5px] w-[24px]"><PasteDocIcon /></Btn>
      </div>
      <div className="ml-[2px] mt-[7px] flex flex-1 flex-col overflow-hidden bg-white text-[12.5px]">
        <div className="flex h-[18px] shrink-0 border-b-2 border-[#cfcfcf] font-bold text-[#111]">
          <div className="flex w-[100px] items-center justify-center">Name</div>
          <div className="flex w-[64px] items-center justify-center border-l border-[#ccc]">1</div>
          <div className="flex w-[64px] items-center justify-center border-l border-[#ccc]">2</div>
          <div className="flex w-[64px] items-center justify-center border-l border-[#ccc]">3</div>
          <div className="flex flex-1 items-center overflow-hidden border-l border-[#ccc] pl-[27px]">4</div>
        </div>
        <div className="flex h-[20px] shrink-0 items-center bg-[#9bbb59] text-[13.5px] italic text-white">
          <span className="ml-[6px] mr-[8px] text-[8px] not-italic leading-none text-black">◢</span>
          Data Collections
        </div>
        <div className="flex h-[20px] shrink-0 items-center border-b border-[#ddd]">
          <span className="ml-[14px] w-[14px] text-[8px] leading-none text-black">◢</span>
          <GridIcon size={16} color="#a8b4bf" fill="#dde4ea" />
          <span className="ml-[5px] w-[52px] font-semibold text-[#3c5a78]">m</span>
          <span className="ml-[-1px] text-[14px] italic text-[#4f81bd]">5x5 Double</span>
        </div>
        {matrix.map((row, i) => (
          <div key={row[0]} className="flex h-[20px] shrink-0 border-b border-[#ddd] pt-[1px] text-[#44608a]">
            <div className="flex w-[100px] items-center justify-end pr-[5px] text-[#4f81bd]">{row[0]}</div>
            {row.slice(1).map((v) => (
              <div key={v} className={`flex w-[64px] items-center justify-end border-l border-white pr-[5px] ${i % 2 === 0 ? 'bg-[#dce6f1]' : ''}`}>{v}</div>
            ))}
            <div className={`flex-1 overflow-hidden whitespace-nowrap border-l border-white pl-[18px] ${i % 2 === 0 ? 'bg-[#dce6f1]' : ''}`}>0.</div>
          </div>
        ))}
        <div className="flex h-[20px] shrink-0 items-center border-b border-[#ddd]">
          <span className="ml-[14px] w-[13px] text-[8px] leading-none text-[#222]">▷</span>
          <div className="flex w-[18px] items-center justify-center font-bold leading-none text-[#222]">[<div className="h-[14px] w-[6px] border border-[#888] bg-[#b8d2e8]" />]</div>
          <span className="ml-[3px] w-[54px] font-bold text-[#c0442a]">x</span>
          <span className="text-[14px] italic text-[#c0563a]">5 x 1 Int32</span>
        </div>
        <div className="flex h-[20px] shrink-0 items-center bg-[#8064a2] text-[13.5px] italic text-white">
          <span className="ml-[6px] mr-[8px] text-[8px] not-italic leading-none text-black">◢</span>
          Individual Objects
        </div>
        <div className="flex h-[20px] shrink-0 items-center border-b border-[#ddd] text-[#3c5a78]">
          <div className="ml-[29px] flex h-[11px] w-[14px] items-center justify-center border border-[#668] bg-[#d8ebb8] text-[7px] font-bold leading-none text-[#222]">1.2</div>
          <span className="ml-[4px] w-[53px]">ans</span>
          <span className="text-[14px] italic text-[#4f81bd]">4</span>
        </div>
        <div className="flex-1" />
        <div className="flex h-[15px] shrink-0 items-center border-t border-[#cfcfcf] bg-[#ececec]">
          <div className="flex w-[14px] justify-center text-[7px] leading-none text-[#444]">▲</div>
          <div className="h-full w-[214px] bg-[#f4f4f4]" />
          <div className="h-full flex-1 bg-[#e4e4e4]" />
          <div className="flex w-[13px] justify-center text-[8px] leading-none text-[#444]">▼</div>
        </div>
      </div>
      <TabStrip
        className="mt-[2px] pl-[2px]"
        tabs={[
          { label: 'Graph Companion', width: 'w-[120px]' },
          { label: 'Environment', active: true, width: 'w-[90px]' },
        ]}
      />
    </div>
  );
}

const colLines = [230, 288, 345, 402, 460, 517, 575, 632, 690, 748, 805, 863, 920, 978];

function OverviewCanvas() {
  const rowYs: number[] = [];
  for (let y = 338; y < 1470; y += 11.55) rowYs.push(y);
  return (
    <svg width="322" height="385" viewBox="15 321 966 1155" className="shrink-0" shapeRendering="crispEdges">
      <rect x="15" y="321" width="966" height="1155" fill="#fff" />
      {rowYs.map((y) => <line key={y} x1="45" x2="978" y1={y} y2={y} stroke="#e0e0e0" strokeWidth="3" />)}
      {colLines.map((x) => <line key={x} x1={x} x2={x} y1="335" y2="1470" stroke="#e0e0e0" strokeWidth="3" />)}
      {rowYs.filter((y) => y < 1440).map((y) => <rect key={y} x="24" y={y} width="10" height="8" fill="none" stroke="#c8c8c8" strokeWidth="2" />)}
      <rect x="68" y="348" width="46" height="1100" fill="#999" />
      <rect x="155" y="348" width="16" height="1100" fill="#999" />
      <rect x="195" y="348" width="34" height="1100" fill="#999" />
      {rowYs.filter((_, i) => i % 4 === 1).map((y) => <line key={y} x1="66" x2="232" y1={y} y2={y} stroke="#e6e6e6" strokeWidth="3" />)}
      <rect x="48" y="338" width="18" height="7" fill="#aaa" />
      <rect x="114" y="338" width="30" height="7" fill="#aaa" />
      <rect x="172" y="338" width="40" height="7" fill="#aaa" />
      <rect x="285" y="338" width="45" height="7" fill="#aaa" />
      <rect x="327" y="348" width="18" height="9" fill="#999" />
      <rect x="363" y="348" width="39" height="9" fill="#666a75" />
      <rect x="420" y="348" width="40" height="9" fill="#666a75" />
      <rect x="480" y="348" width="37" height="9" fill="#666a75" />
      <rect x="327" y="369" width="18" height="9" fill="#999" />
      <rect x="363" y="369" width="39" height="9" fill="#666a75" />
      <rect x="426" y="369" width="34" height="9" fill="#666a75" />
      <rect x="402" y="648" width="288" height="9" fill="#c3d2e3" />
      <rect x="402" y="657" width="33" height="55" fill="#c3d2e3" />
      <rect x="460" y="657" width="32" height="55" fill="#c3d2e3" />
      <rect x="517" y="657" width="33" height="55" fill="#c3d2e3" />
      <rect x="575" y="657" width="32" height="55" fill="#c3d2e3" />
      <rect x="632" y="657" width="33" height="55" fill="#c3d2e3" />
      {colLines.concat([57, 115, 172]).map((x) => <rect key={x} x={x - 44} y="328" width="38" height="5" fill="#333" />)}
      <rect x="24" y="324" width="20" height="12" fill="#fff" stroke="#222" strokeWidth="3" />
      <rect x="24" y="546" width="10" height="9" fill="#f5b860" />
      <rect x="798" y="546" width="60" height="15" rx="5" fill="#fff" stroke="#000" strokeWidth="5" />
      <rect x="38" y="337" width="936" height="432" fill="none" stroke="#ff00e0" strokeWidth="9" />
    </svg>
  );
}

function OverviewPanel() {
  return (
    <div className="mt-[5px] flex flex-1 flex-col">
      <DockTitle title="Overview" />
      <div className="mt-[8px] flex h-[23px] shrink-0 items-center pl-[4px]">
        <Btn className="w-[26px]"><GridIcon size={16} color="#8aa0b4" fill="#d6e2ee" /></Btn>
        <div className="ml-[4px] h-[20px] w-px bg-[#d8d8d8]" />
        <Btn className="ml-[5px] w-[25px]"><FaArrowLeft size={15} color="#2a7ab8" /></Btn>
        <div className="ml-[10px] flex w-[23px] justify-center"><FaArrowRight size={15} color="#999" /></div>
        <Combo className="ml-[4px] w-[101px] bg-[#fdfdfd]">
          <SheetIcon />
          <span>(Overvie</span>
        </Combo>
        <Btn className="ml-[4px] w-[41px] gap-[2px]">
          <svg width="17" height="17" viewBox="0 0 17 17"><rect x="1" y="1" width="15" height="15" fill="#dde6f0" /><rect x="1" y="1" width="5" height="5" fill="#2060c0" /><rect x="6" y="1" width="5" height="5" fill="#e04020" /><rect x="11" y="6" width="5" height="5" fill="#20a0e0" /><circle cx="11" cy="11" r="3.5" fill="#bbb" stroke="#666" /></svg>
          <Tick />
        </Btn>
        <Btn className="ml-[4px] w-[41px] gap-[2px]">
          <svg width="17" height="17" viewBox="0 0 17 17"><rect x="0.5" y="0.5" width="16" height="16" fill="#e6f2fb" stroke="#2a6fb0" /><path d="M1 13L5 8L8 11L12 6L16 10V16H1Z" fill="#5aa8e0" /><circle cx="5" cy="4.5" r="1.5" fill="#2a6fb0" /></svg>
          <Tick />
        </Btn>
        <Btn className="ml-[4px] w-[29px]"><span className="text-[10px] leading-none text-[#444]">···</span></Btn>
      </div>
      <div className="ml-[1px] mt-[3px]"><OverviewCanvas /></div>
      <TabStrip
        className="mt-[3px] pl-[2px]"
        tabs={[
          { label: 'Overview', active: true, width: 'w-[71px]' },
          { label: 'Command Recorder', width: 'w-[129px]' },
        ]}
      />
    </div>
  );
}

function StatusBar() {
  return (
    <div className="flex h-[24px] shrink-0 items-center pt-[4px] text-[11.5px] text-[#222]">
      <span className="ml-[1159px] w-[56px]">Row: 20</span>
      <span className="w-[56px]">Col: 14</span>
      <div className="h-[20px] w-px bg-[#c8c8c8]" />
      <GridIcon size={16} color="#333" fill="#fff" />
      <svg width="16" height="16" viewBox="0 0 16 16" className="ml-[14px] shrink-0"><path d="M1 5V1H6M10 1H15V5M15 11V15H10M6 15H1V11M1 8H15M8 1V15" fill="none" stroke="#333" /></svg>
      <svg width="16" height="16" viewBox="0 0 16 16" className="ml-[14px] shrink-0"><rect x="5" y="1" width="6" height="14" rx="2" fill="none" stroke="#333" /><rect x="1" y="5" width="14" height="6" rx="2" fill="none" stroke="#333" /></svg>
      <div className="ml-[13px] h-[20px] w-px bg-[#c8c8c8]" />
      <svg width="17" height="17" viewBox="0 0 17 17" className="ml-[14px] shrink-0"><circle cx="7" cy="7" r="6" fill="#fff" stroke="#222" /><path d="M4 5H10M4 8H10M6 3V11M8.5 3V11" stroke="#222" strokeWidth="0.8" /><path d="M11 11L16 16" stroke="#1a6fc2" strokeWidth="2.2" /></svg>
      <div className="ml-[8px] flex h-[15px] w-[16px] items-center justify-center rounded-[3px] bg-white"><Minus size={11} color="#0067c0" strokeWidth={3} /></div>
      <div className="relative ml-[4px] h-[3px] w-[80px] bg-[#8a8a8a]">
        <div className="h-full w-[40px] bg-[#0067c0]" />
        <div className="absolute left-[34px] top-[-5px] flex h-[13px] w-[13px] items-center justify-center rounded-full bg-white"><div className="h-[6px] w-[6px] rounded-full bg-[#0067c0]" /></div>
      </div>
      <div className="ml-[4px] flex h-[15px] w-[14px] items-center justify-center rounded-[3px] bg-white"><Plus size={11} color="#0067c0" strokeWidth={3} /></div>
      <div className="ml-[3px] flex h-[15px] w-[56px] items-center justify-center rounded-[3px] bg-white text-[11px]">100%</div>
      <div className="ml-[4px] h-[20px] w-px bg-[#c8c8c8]" />
    </div>
  );
}

export default function App() {
  return (
    <div className="flex h-[1200px] w-[1600px] flex-col overflow-hidden bg-[#f3f3f3] font-['Noto_Sans',sans-serif]">
      <TitleBar />
      <MenuBar />
      <MainToolbar />
      <div className="flex h-[1083px] shrink-0">
        <div className="flex w-[295px] shrink-0 flex-col">
          <WorkspacePanel />
          <PropertiesPanel />
        </div>
        <div className="ml-[5px] flex w-[970px] shrink-0 flex-col">
          <NameBar />
          <SheetArea />
          <SheetTabs />
          <CommandPanel />
        </div>
        <div className="ml-[4px] flex w-[323px] shrink-0 flex-col">
          <EnvironmentPanel />
          <OverviewPanel />
        </div>
      </div>
      <StatusBar />
    </div>
  );
}
